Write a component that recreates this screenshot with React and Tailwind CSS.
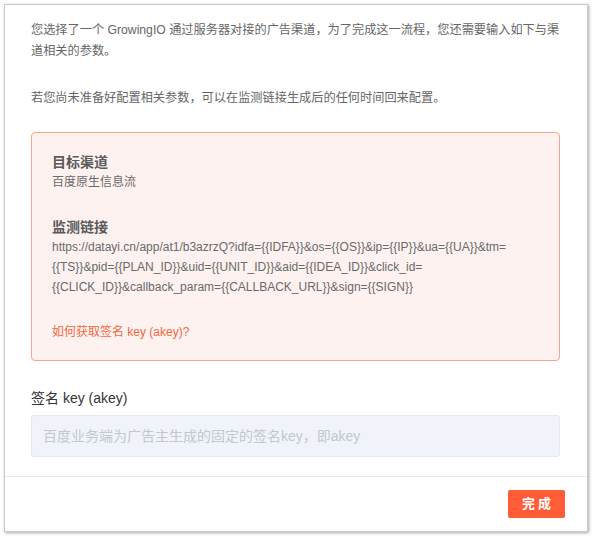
import React from "react";

const font = { fontFamily: '"Liberation Sans", "Noto Sans CJK SC", sans-serif' };

export default function App() {
  return (
    <div className="w-[593px] h-[537px] bg-white pt-[4px] pl-[4px]" style={font}>
      <div className="w-[584px] h-[528px] bg-white border border-[#c9c9c9] shadow-[1px_1px_3px_rgba(0,0,0,0.35)] flex flex-col">
        <div className="pl-[26px] pr-[27px] pt-[15px]">
          <p className="text-[12.2px] leading-[21px] text-[#666666] whitespace-nowrap">
            您选择了一个 GrowingIO 通过服务器对接的广告渠道，为了完成这一流程，您还需要输入如下与渠
            <br />
            道相关的参数。
          </p>
          <p className="mt-[26px] text-[12.2px] leading-[21px] text-[#666666] whitespace-nowrap">
            若您尚未准备好配置相关参数，可以在监测链接生成后的任何时间回来配置。
          </p>

          <div className="mt-[23px] rounded-[4px] border border-[#f6a591] bg-[#fdf2f0] pl-[20px] pr-[20px] pt-[19px] pb-[18px]">
            <div className="text-[14px] leading-[20px] font-bold text-[#5a5a5a]">目标渠道</div>
            <div className="text-[12px] leading-[20px] text-[#6a6a6a]">百度原生信息流</div>
            <div className="mt-[25px] text-[14px] leading-[20px] font-bold text-[#5a5a5a]">监测链接</div>
            <div className="text-[12px] leading-[20px] text-[#6a6a6a] whitespace-nowrap">
              https://datayi.cn/app/at1/b3azrzQ?idfa={"{{IDFA}}"}&amp;os={"{{OS}}"}&amp;ip={"{{IP}}"}&amp;ua={"{{UA}}"}&amp;tm=
              <br />
              {"{{TS}}"}&amp;pid={"{{PLAN_ID}}"}&amp;uid={"{{UNIT_ID}}"}&amp;aid={"{{IDEA_ID}}"}&amp;click_id=
              <br />
              {"{{CLICK_ID}}"}&amp;callback_param={"{{CALLBACK_URL}}"}&amp;sign={"{{SIGN}}"}
            </div>
            <div className="mt-[25px] text-[12px] leading-[20px] text-[#f2683f]">如何获取签名 key (akey)?</div>
          </div>

          <div className="mt-[27px] text-[14px] leading-[20px] text-[#333333]">签名 key (akey)</div>
          <div className="mt-[7px] h-[42px] rounded-[3px] border border-[#e4e8f0] bg-[#f0f3fa] flex items-center px-[11px] text-[14px] text-[#c3c7ce]">
            百度业务端为广告主生成的固定的签名key，即akey
          </div>
        </div>

        <div className="mt-[19px] border-t border-[#e8e8e8] flex justify-end pr-[22px] pt-[13px]">
          <button className="w-[57px] h-[28px] rounded-[2px] bg-[#ff5c37] text-white text-[13px] font-bold tracking-[3px] pl-[3px]">
            完成
          </button>
        </div>
      </div>
    </div>
  );
}
